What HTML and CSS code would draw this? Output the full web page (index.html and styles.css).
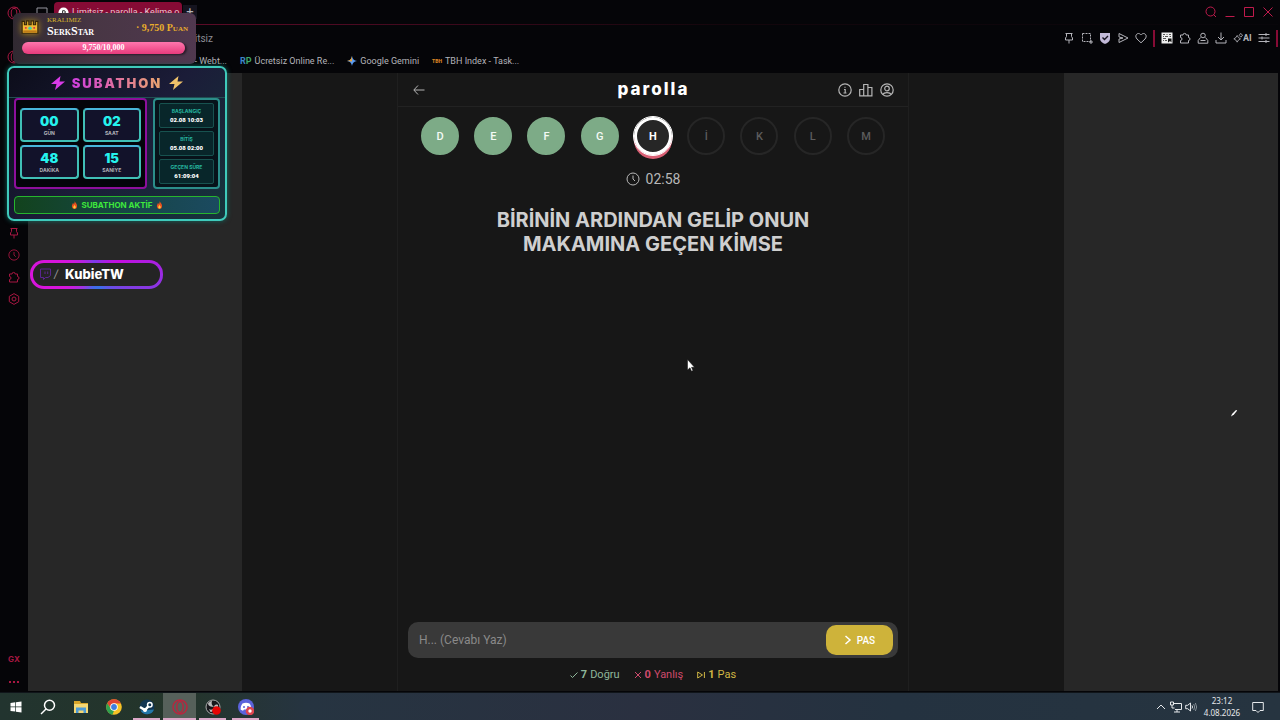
FILE: index.html
```html
<!DOCTYPE html>
<html lang="tr">
<head>
    <meta charset="UTF-8">
    <meta name="viewport" content="width=device-width, initial-scale=1.0">
    <title>Limitsiz - parolla</title>
    <link rel="stylesheet" href="styles.css">
</head>
<body>
    <!-- shared icons -->
    <svg class="sprite" aria-hidden="true">
        <symbol id="i-pin" viewBox="0 0 12 12"><path d="M2.500 1.500h7M3.500 1.500v3L2.500 6v2h7V6l-1-1.500v-3M6 8v3.500"/></symbol>
        <symbol id="i-puzzle" viewBox="0 0 12 12"><path d="M1.500 3h2.500a1.600 1.600 0 0 1 3.200 0H9.500v2.500a1.500 1.500 0 0 1 0 3V11h-8V8.500a1.500 1.500 0 0 0 0-3z"/></symbol>
        <symbol id="i-opera" viewBox="0 0 14 14"><circle cx="7" cy="7" r="6"/><ellipse cx="7" cy="7" rx="2.800" ry="4.600"/><path d="M7 2.400a3 3 0 0 1 4 0M7 11.600a3 3 0 0 0 4 0"/></symbol>
        <symbol id="i-clock" viewBox="0 0 14 14"><circle cx="7" cy="7" r="6"/><path d="M7 3.500V7l2 2"/></symbol>
        <symbol id="i-fire" viewBox="0 0 10 12"><path fill="#e8501e" d="M5 0c.5 2 3.800 3.500 3.800 7A3.800 4.300 0 0 1 1 8C1 5.500 2.500 5 2.500 3c1 .5 1.500 1.200 1.500 2C5 4 5.500 2 5 0z"/><path fill="#ffc83d" d="M5 5.500c.3 1.500 2 2 2 3.800a2 2 0 0 1-4 0C3 8 4.500 7.500 5 5.500z"/></symbol>
        <symbol id="i-bolt" viewBox="0 0 14 14"><path d="M9.500 0 0 8h5.500L4 14l10-8.500H8.500z"/></symbol>
    </svg>

    <div class="browser">
        <nav class="sidebar">
            <a href="#" aria-label="Opera"><svg class="icon-l"><use href="#i-opera"/></svg></a>
            <a href="#" class="sidebar-home" aria-label="GX"><svg class="icon-l"><use href="#i-opera"/></svg></a>
            <div class="sidebar-tools">
                <a href="#" aria-label="Pin"><svg class="icon"><use href="#i-pin"/></svg></a>
                <a href="#" aria-label="Geçmiş"><svg class="icon"><use href="#i-clock"/></svg></a>
                <a href="#" aria-label="Eklentiler"><svg class="icon"><use href="#i-puzzle"/></svg></a>
                <a href="#" aria-label="Ayarlar"><svg class="icon" viewBox="0 0 12 12"><path d="M6 .6 10.700 3.300v5.400L6 11.400 1.300 8.700V3.300z"/><circle cx="6" cy="6" r="2"/></svg></a>
            </div>
            <div class="sidebar-bottom">
                <span class="gx">GX</span>
                <span class="more"><i></i><i></i><i></i></span>
            </div>
        </nav>

        <div class="window">
            <div class="tabs">
                <svg class="workspace" viewBox="0 0 12 12"><path d="M1 2h10v8H1z"/></svg>
                <div class="tab">
                    <svg class="tab-icon" viewBox="0 0 12 12"><circle cx="6" cy="6" r="5.500" fill="#fff"/><path d="M5 9V4h1.500a1.500 1.500 0 0 1 0 3H5" stroke="#222"/></svg>
                    <span>Limitsiz - parolla - Kelime o</span>
                </div>
                <button class="new-tab" aria-label="Yeni sekme">+</button>
                <div class="window-buttons">
                    <button aria-label="Ara"><svg class="icon" viewBox="0 0 12 12"><circle cx="5.500" cy="5.500" r="4.500"/><path d="m8.500 8.500 2.500 2.500"/></svg></button>
                    <button aria-label="Küçült"><svg class="icon" viewBox="0 0 12 12"><path d="M1.500 10.500h9"/></svg></button>
                    <button aria-label="Büyüt"><svg class="icon" viewBox="0 0 12 12"><path d="M1.500 1.500h9v9h-9z"/></svg></button>
                    <button aria-label="Kapat"><svg class="icon" viewBox="0 0 12 12"><path d="m1.500 1.500 9 9m0-9-9 9"/></svg></button>
                </div>
            </div>

            <div class="address">
                <span class="address-text">Limitsiz</span>
                <div class="address-tools">
                    <svg class="icon"><use href="#i-pin"/></svg>
                    <svg class="icon" viewBox="0 0 12 12"><path stroke-dasharray="2 1" d="M1.500 1.500h8v8h-8z"/><path d="M10 8v4M8 10h4"/></svg>
                    <svg class="icon" viewBox="0 0 12 12"><path fill="#c3bad9" stroke="none" d="M1 1h10v5.500c0 3-2.500 4.500-5 5.500-2.500-1-5-2.500-5-5.500z"/><path stroke="#161320" stroke-width="1.400" d="m3.500 5.500 2 2 3.500-3.500"/></svg>
                    <svg class="icon" viewBox="0 0 12 12"><path d="M2 1.500 11 6l-9 4.500V7L6 6 2 5z"/></svg>
                    <svg class="icon" viewBox="0 0 12 12"><path d="M6 10.800 2 7C-.5 4 1.500 1.500 3.500 1.500 5 1.500 6 3 6 3s1-1.500 2.500-1.500c2 0 4 2.500 1.500 5.500z"/></svg>
                    <i class="divider"></i>
                    <svg class="icon" viewBox="0 0 12 12"><path fill="#eee" stroke="none" d="M.5.5h11v11H.5z"/><path stroke="#555" d="M2 2.500h2M5.500 2.500h1M8 2.500h2M2 4.500h1M4 4.500h3M8.500 4.500H10M2 6.500h3M2 8.500h1M4 8.500h2"/><path fill="#111" stroke="none" d="M7 6.500h3.500v4L9 9l-2 1.500z"/></svg>
                    <svg class="icon"><use href="#i-puzzle"/></svg>
                    <svg class="icon" viewBox="0 0 12 12"><circle cx="6" cy="3.500" r="2.300"/><path d="M3.500 5.500 1.200 8.500v2.700h9.600V8.500L8.500 5.500M3.500 8.500h5"/></svg>
                    <svg class="icon" viewBox="0 0 12 12"><path d="M6 .5V8M3 5l3 3 3-3M1 8v3h10V8"/></svg>
                    <span class="ai"><svg class="icon-s" viewBox="0 0 12 12"><path d="M5 3 6.500 5.500 9 7 6.500 8.500 5 11 3.500 8.500 1 7l2.500-1.500zM9 .5l2.500 2L9.500 5 7.500 3z"/></svg>AI</span>
                    <svg class="icon" viewBox="0 0 12 12"><path d="M.5 2.500h11M.5 6h11M.5 9.500h11M8 1v3M4 4.500v3M8 8v3"/></svg>
                    <i class="divider"></i>
                </div>
            </div>

            <div class="bookmarks">
                <a href="#" class="first">- Webt...</a>
                <a href="#"><b class="rp">R<em>P</em></b>Ücretsiz Online Re...</a>
                <a href="#"><svg class="gem" viewBox="0 0 10 10"><path fill="#5b9bf0" d="M5 0c.5 3 2 4.500 5 5-3 .5-4.500 2-5 5-.5-3-2-4.500-5-5 3-.5 4.500-2 5-5z"/><path fill="#e8a33a" d="M5 0C4.500 3 3 4.500 0 5l5 .5z"/></svg>Google Gemini</a>
                <a href="#"><b class="tbh">TBH</b>TBH Index - Task...</a>
            </div>

            <div class="page">
                <aside class="ad"></aside>
                <div class="stage">
                    <main class="app">
                        <header class="app-header">
                            <a href="#" class="back" aria-label="Geri"><svg viewBox="0 0 12 12"><path d="M11.500 6H1M5 1.500.8 6 5 10.500"/></svg></a>
                            <h1>parolla</h1>
                            <div class="app-actions">
                                <button aria-label="Bilgi"><svg viewBox="0 0 14 14"><circle cx="7" cy="7" r="6.200"/><path d="M6 6.500h1.200v3.500M5.500 10h3M7 3.800v1"/></svg></button>
                                <button aria-label="İstatistik"><svg viewBox="0 0 14 14"><path d="M.7 6.500h4v6.300h-4zM4.700 1.500h4.200v11.300H4.700zM8.900 4.500h4v8.300h-4z"/></svg></button>
                                <button aria-label="Profil"><svg viewBox="0 0 14 14"><circle cx="7" cy="7" r="6.200"/><circle cx="7" cy="5.500" r="2.300"/><path d="M3 11.500c1-2.500 7-2.500 8 0"/></svg></button>
                            </div>
                        </header>

                        <ul class="letters">
                            <li class="done">D</li>
                            <li class="done">E</li>
                            <li class="done">F</li>
                            <li class="done">G</li>
                            <li class="current">H</li>
                            <li>İ</li>
                            <li>K</li>
                            <li>L</li>
                            <li>M</li>
                        </ul>

                        <div class="clock"><svg class="icon-l"><use href="#i-clock"/></svg>02:58</div>

                        <h2 class="question">BİRİNİN ARDINDAN GELİP ONUN<br>MAKAMINA GEÇEN KİMSE</h2>

                        <form class="answer">
                            <input type="text" aria-label="Cevap" placeholder="H... (Cevabı Yaz)">
                            <button type="button"><svg viewBox="0 0 8 10"><path d="m1.500 1 4.500 4-4.500 4"/></svg>PAS</button>
                        </form>

                        <div class="score">
                            <span class="right"><svg viewBox="0 0 8 8"><path d="m.5 4.500 2 2 5-5"/></svg><b>7</b> Doğru</span>
                            <span class="wrong"><svg viewBox="0 0 8 8"><path d="m1 1 6 6m0-6-6 6"/></svg><b>0</b> Yanlış</span>
                            <span class="passed"><svg viewBox="0 0 8 8"><path d="M.7 1v6L5.500 4zM7.400 1v6"/></svg><b>1</b> Pas</span>
                        </div>
                    </main>
                </div>
                <aside class="ad"></aside>
            </div>
        </div>
    </div>

    <footer class="taskbar">
        <button class="start" aria-label="Başlat"><svg viewBox="0 0 16 16"><path fill="#fff" d="m2.500 4 4.800-.7v4.300H2.500zM8 3.200l5.500-.8v5.200H8zM2.500 8.300h4.800v4.300L2.500 12zM8 8.300h5.500v5.300L8 12.800z"/></svg></button>
        <button aria-label="Ara"><svg viewBox="0 0 16 16" fill="none" stroke="#fff" stroke-width="1.500"><circle cx="9.500" cy="6.200" r="5"/><path d="M6 10 1 15"/></svg></button>
        <button aria-label="Dosyalar"><svg viewBox="0 0 16 16"><path fill="#d9a62b" d="M1 2h6l1 2h7v3H1z"/><path fill="#f4d774" d="M1 5h14v9H1z"/><path fill="#4d9bd6" d="M3 8.500h10V14h-2.500v-2.500h-5V14H3z"/></svg></button>
        <button aria-label="Chrome"><svg viewBox="0 0 16 16"><circle cx="8" cy="8" r="7.800" fill="#f6c325"/><path fill="#df4434" d="M1.200 4.200A7.800 7.800 0 0 1 15 4.500H8L4.800 9.500z"/><path fill="#2fa150" d="M1.200 4.200 5 10l3 1.800-1.600 3.900A7.800 7.800 0 0 1 1.200 4.200z"/><circle cx="8" cy="8" r="3.800" fill="#fff"/><circle cx="8" cy="8" r="2.900" fill="#3e7de0"/></svg></button>
        <button class="open" aria-label="Steam"><svg viewBox="0 0 16 16"><circle cx="8" cy="8" r="7.500" fill="#123552"/><path fill="#2477a8" d="M1.500 11.500A7.500 7.500 0 0 0 15 10.500L9 11z"/><path stroke="#fff" stroke-width="2.600" d="m1 8 5 3 4.500-5"/><circle cx="10.800" cy="5.800" r="3" fill="#fff"/><circle cx="10.800" cy="5.800" r="1.500" fill="#123552"/><circle cx="6" cy="11" r="2" fill="#fff"/></svg></button>
        <button class="open active" aria-label="Opera GX"><svg viewBox="0 0 16 16" fill="none" stroke="#b5283f" stroke-width="1.500"><circle cx="8" cy="8" r="7"/><ellipse cx="8" cy="8" rx="3.200" ry="5.500"/></svg></button>
        <button class="open" aria-label="OBS"><svg viewBox="0 0 16 16"><circle cx="8" cy="8" r="7" fill="#17171b" stroke="#aaa"/><path fill="#bbb" d="M7 2c-1 3 0 4.500 2 5.500C6 8 4 7.500 3 5c0-1 2-3 4-3zM13 6c-2-1-4 0-4 2.500 1.500-1 4 0 4 2zM4 10c2 1.500 4 .5 4.500-1 .5 2-1 4-3 4z"/><circle cx="11.500" cy="11.500" r="4.300" fill="#e60505"/></svg></button>
        <button class="open" aria-label="Discord"><svg viewBox="0 0 16 16"><circle cx="8" cy="8" r="8" fill="#5b63dc"/><path fill="#fff" d="M4.500 4.500c2-1 5-1 7 0 1.500 2 2 4 1.800 6.200l-2.300 1-1-1.200H6l-1 1.200-2.300-1C2.500 8.500 3 6.500 4.500 4.500z"/><circle cx="6" cy="8" r="1" fill="#5b63dc"/><circle cx="10" cy="8" r="1" fill="#5b63dc"/><circle cx="12" cy="12" r="4.300" fill="#dd4550"/><circle cx="12" cy="12" r="1.700" fill="#fff"/></svg></button>
        <div class="tray">
            <svg viewBox="0 0 12 12"><path d="m2 8 4-4 4 4"/></svg>
            <svg viewBox="0 0 12 12"><path d="M4 2.500h7.500v6H5M7 8.500V11M4 11h6M.5 1h3v3h-3zM2 4v3h2.500"/></svg>
            <svg viewBox="0 0 12 12"><path d="M.7 4.300h2L5.500 2v8L2.700 7.700h-2zM7 4.500q1 1.500 0 3"/><path opacity=".5" d="M8.700 3q2 3 0 6M10.400 2q2.500 4 0 8"/></svg>
            <time>23:12<br>4.08.2026</time>
            <svg class="notice" viewBox="0 0 12 12"><path d="M.7 1.500h10.600v8H8L6 11.500l-2-2H.7z"/></svg>
        </div>
    </footer>

    <!-- stream overlays -->
    <section class="king">
        <div class="king-top">
            <svg class="crown" viewBox="0 0 16 14"><path fill="#f2ba32" stroke="#332409" d="M1 2h2v3h2V1.500h2V5h2V1.500h2V5h2V2h2v10.500H1z"/><path fill="#bf7c18" d="M2 10h12v2H2z"/><circle cx="8" cy="8" r="1.500" fill="#3fd0ae"/><path fill="#d8354a" d="M3.500 7h1.500v1.500H3.500zM11 7h1.500v1.500H11z"/></svg>
            <div class="king-name">
                <span>KRALIMIZ</span>
                <strong>SerkStar</strong>
            </div>
            <span class="king-score">· 9,750 Puan</span>
        </div>
        <div class="king-bar">9,750/10,000</div>
    </section>

    <section class="subathon">
        <h3><svg class="bolt"><use href="#i-bolt"/></svg><span>SUBATHON</span><svg class="bolt gold"><use href="#i-bolt"/></svg></h3>
        <div class="sub-body">
            <div class="counter">
                <div><b>00</b><small>GÜN</small></div>
                <div><b>02</b><small>SAAT</small></div>
                <div><b>48</b><small>DAKİKA</small></div>
                <div><b>15</b><small>SANİYE</small></div>
            </div>
            <div class="dates">
                <div><small>BAŞLANGIÇ</small><b>02.08 10:03</b></div>
                <div><small>BİTİŞ</small><b>05.08 02:00</b></div>
                <div><small>GEÇEN SÜRE</small><b>61:09:04</b></div>
            </div>
        </div>
        <div class="sub-status"><svg><use href="#i-fire"/></svg>SUBATHON AKTİF<svg><use href="#i-fire"/></svg></div>
    </section>

    <div class="channel">
        <svg viewBox="0 0 12 12"><path d="M1.500 1h10v6.500l-2.500 2H6.500L4.500 11.500v-2h-3zM6 3.500V6M8.700 3.500V6"/></svg>
        <i>/</i>
        <strong>KubieTW</strong>
    </div>

    <svg class="cursor" viewBox="0 0 8 13"><path fill="#fff" stroke="#111" stroke-width=".5" d="M.5.5v10.500L3 8.800l1.500 3.500 1.500-.7-1.500-3.300h3z"/></svg>
    <svg class="pen" viewBox="0 0 8 8"><path fill="#fff" d="M1 7.500 2 5l4-4 1.200.5L4 5.500z"/></svg>
</body>
</html>
```
FILE: styles.css
```css
* {
    box-sizing: border-box;
}
body {
    margin: 0;
    height: 100vh;
    display: flex;
    flex-direction: column;
    position: relative;
    overflow: hidden;
    background: #050508;
    color: #b4b4ba;
    font-family: Roboto, "Noto Sans", sans-serif;
    font-size: 9px;
}
button {
    border: none;
    background: none;
    padding: 0;
    color: inherit;
    font-family: inherit;
    cursor: pointer;
}
a {
    color: inherit;
    text-decoration: none;
}
svg {
    display: block;
    flex: none;
    fill: none;
}
.sprite {
    position: absolute;
    width: 0;
    height: 0;
}
.icon {
    width: 12px;
    height: 12px;
    stroke: currentColor;
}
.icon-l {
    width: 14px;
    height: 14px;
    stroke: currentColor;
}
.icon-s {
    width: 10px;
    height: 10px;
    stroke: currentColor;
}

/* browser */
.browser {
    flex: 1;
    min-height: 0;
    display: flex;
    padding: 0 2px 1px 0;
}
.sidebar {
    width: 28px;
    display: flex;
    flex-direction: column;
    align-items: center;
    padding: 6px 0 6px;
    color: #a81742;
}
.sidebar-home {
    margin-top: 30px;
}
.sidebar-tools {
    display: flex;
    flex-direction: column;
    gap: 10px;
    margin-top: 163px;
}
.sidebar-bottom {
    display: flex;
    flex-direction: column;
    align-items: center;
    gap: 15px;
    margin-top: auto;
}
.gx {
    font-family: Inter, sans-serif;
    font-size: 8px;
    font-weight: bold;
    line-height: 10px;
}
.more {
    display: flex;
    gap: 2px;
    height: 6px;
    align-items: center;
}
.more i {
    width: 2px;
    height: 2px;
    background: #a81742;
}
.window {
    flex: 1;
    display: flex;
    flex-direction: column;
}
.tabs {
    display: flex;
    align-items: center;
    height: 25px;
    padding: 0 2px 0 8px;
    border-bottom: 1px solid;
    border-image: linear-gradient(90deg, #6c0c2c, #4d0a22 25%, #14060c 55%, #08060a) 1;
}
.workspace {
    width: 12px;
    height: 12px;
    margin-right: 6px;
    stroke: #96969e;
}
.tab {
    display: flex;
    align-items: center;
    gap: 3px;
    width: 128px;
    height: 20px;
    padding-left: 4px;
    border-radius: 4px 4px 0 0;
    background: #860b35;
    color: #e5c6d0;
    white-space: nowrap;
}
.tab-icon {
    width: 11px;
    height: 11px;
}
.new-tab {
    width: 14px;
    height: 14px;
    margin-left: 1px;
    background: #15141f;
    font-size: 13px;
    line-height: 14px;
}
.window-buttons {
    display: flex;
    gap: 7px;
    margin-left: auto;
    padding-right: 2px;
    color: #c01a4c;
}
.address {
    display: flex;
    align-items: center;
    justify-content: space-between;
    height: 26px;
}
.address-text {
    width: 185px;
    text-align: right;
    font-size: 10px;
    color: #8c8c94;
}
.address-tools {
    display: flex;
    align-items: center;
    gap: 6px;
}
.divider {
    width: 2px;
    height: 17px;
    background: #860b35;
}
.ai {
    display: flex;
    align-items: center;
    width: 19px;
    font-weight: bold;
}
.bookmarks {
    display: flex;
    align-items: center;
    gap: 13px;
    height: 22px;
    padding-bottom: 3px;
}
.bookmarks a {
    display: flex;
    align-items: center;
    gap: 3px;
    white-space: nowrap;
}
.bookmarks .first {
    width: 199px;
    justify-content: flex-end;
}
.rp {
    color: #3e86c9;
}
.rp em {
    color: #3fa76a;
    font-style: normal;
}
.gem {
    width: 10px;
    height: 10px;
}
.tbh {
    color: #d98324;
    font-size: 5px;
    font-weight: 900;
}

/* page */
.page {
    flex: 1;
    min-height: 0;
    display: grid;
    grid-template-columns: 13fr 50fr 13fr;
}
.ad {
    background: #272727;
}
.stage {
    display: flex;
    justify-content: center;
    background: #171717;
}
.app {
    display: flex;
    flex-direction: column;
    width: 100%;
    max-width: 512px;
    border: solid #1f1f1f;
    border-width: 0 1px;
}
.app-header {
    display: grid;
    grid-template-columns: 1fr auto 1fr;
    align-items: center;
    height: 34px;
    padding: 0 14px 0 15px;
    border-bottom: 1px solid #222;
    color: #b5b5b5;
}
.app-header h1 {
    margin: 0;
    padding-bottom: 2px;
    color: #fff;
    font-family: Inter, sans-serif;
    font-size: 17px;
    font-weight: 800;
    letter-spacing: 2px;
    line-height: 20px;
}
.back svg {
    width: 12px;
    height: 12px;
    stroke: currentColor;
}
.app-actions {
    display: flex;
    justify-content: flex-end;
    gap: 7px;
}
.app-actions svg {
    width: 14px;
    height: 14px;
    stroke: currentColor;
    stroke-width: 1.2;
}
.letters {
    display: flex;
    justify-content: space-between;
    margin: 0;
    padding: 10px 23px;
    list-style: none;
}
.letters li {
    display: flex;
    align-items: center;
    justify-content: center;
    width: 38px;
    height: 38px;
    border: 2px solid #262626;
    border-radius: 50%;
    color: #5c5c5c;
    font-size: 11px;
    font-weight: 500;
}
.letters .done {
    border-color: #7dab87;
    background: #7dab87;
    color: #f4faf5;
}
.letters .current {
    border: 3px solid #fff;
    outline: 1px solid #fff;
    background: #262626;
    box-shadow: 0 4px 0 #d95f74;
    color: #fff;
    font-weight: 700;
}
.clock {
    display: flex;
    align-items: center;
    justify-content: center;
    gap: 6px;
    margin-top: 5px;
    color: #b8b8b8;
    font-size: 14px;
    line-height: 18px;
}
.question {
    margin: 20px 0 0;
    color: #cfcfcf;
    font-family: Inter, sans-serif;
    font-size: 20px;
    font-weight: 700;
    line-height: 24px;
    text-align: center;
}
.answer {
    display: flex;
    height: 36px;
    margin: auto 10px 0;
    padding: 3px 5px 3px 11px;
    border-radius: 10px;
    background: #393939;
}
.answer input {
    flex: 1;
    min-width: 0;
    padding: 0;
    border: none;
    outline: none;
    background: none;
    color: #ddd;
    font-family: inherit;
    font-size: 12px;
}
.answer input::placeholder {
    color: #8a8a8a;
}
.answer button {
    display: flex;
    align-items: center;
    justify-content: center;
    gap: 5px;
    width: 67px;
    border-radius: 10px;
    background: #ceb33a;
    color: #fff;
    font-size: 10px;
    font-weight: 500;
}
.answer button svg {
    width: 8px;
    height: 10px;
    stroke: #fff;
    stroke-width: 1.5;
}
.score {
    display: flex;
    justify-content: center;
    gap: 14px;
    padding: 9px 0 8px;
    font-size: 11px;
    line-height: 16px;
}
.score span {
    display: flex;
    align-items: center;
    gap: 3px;
}
.score svg {
    width: 8px;
    height: 8px;
    stroke: currentColor;
}
.right {
    color: #8fb79a;
}
.wrong {
    color: #cf4a6c;
}
.passed {
    color: #cfb644;
}

/* taskbar */
.taskbar {
    display: flex;
    height: 28px;
    border-top: 1px solid #10151a;
    background: linear-gradient(90deg, #22342f, #24352a 14%, #263441 24%, #2a3040 50%, #243240 70%, #263440);
}
.taskbar button {
    display: flex;
    align-items: center;
    justify-content: center;
    width: 33px;
}
.taskbar .start {
    width: 31px;
}
.taskbar button svg {
    width: 16px;
    height: 16px;
}
.taskbar .open {
    background: linear-gradient(#dba8c8, #dba8c8) center bottom / 27px 2px no-repeat;
}
.taskbar .active {
    background: linear-gradient(#dba8c8, #dba8c8) center bottom / 33px 2px no-repeat, #56605a;
}
.tray {
    display: flex;
    align-items: center;
    gap: 3px;
    margin-left: auto;
    padding-right: 16px;
    color: #e6e9ec;
}
.tray svg {
    width: 12px;
    height: 12px;
    stroke: currentColor;
}
.tray time {
    width: 44px;
    margin-right: 5px;
    font-family: "Noto Sans", sans-serif;
    font-size: 8px;
    line-height: 12px;
    text-align: center;
    white-space: nowrap;
}

/* king widget */
.king {
    position: absolute;
    left: 13px;
    top: 13px;
    width: 183px;
    height: 51px;
    padding: 3px 8px 0;
    border-radius: 6px;
    background: linear-gradient(90deg, #302931, #483644 45%, #50384f);
    font-family: "Liberation Serif", serif;
    font-weight: bold;
}
.king-top {
    display: flex;
    align-items: center;
    height: 22px;
    gap: 8px;
}
.crown {
    width: 18px;
    height: 16px;
    filter: drop-shadow(0 0 3px #b08c1c);
}
.king-name {
    display: flex;
    flex-direction: column;
}
.king-name span {
    color: #d8b62c;
    font-size: 7px;
    font-weight: normal;
    line-height: 9px;
}
.king-name strong {
    color: #fff;
    font-size: 12px;
    font-variant: small-caps;
    line-height: 13px;
}
.king-score {
    margin-left: auto;
    color: #e9ae2b;
    font-size: 10px;
    font-variant: small-caps;
}
.king-bar {
    height: 12px;
    margin: 4px 3px 0 1px;
    border-radius: 6px;
    background: linear-gradient(#ff76ad, #e83b7c);
    box-shadow: 2px 1px 2px #2b1c2a;
    color: #fff;
    font-size: 8px;
    line-height: 12px;
    text-align: center;
}

/* subathon widget */
.subathon {
    position: absolute;
    left: 7px;
    top: 66px;
    width: 220px;
    padding: 0 5px 5px;
    border: 2px solid #3fcabb;
    border-radius: 7px;
    background: linear-gradient(135deg, #0c0d1a, #1b1c38 50%, #16343c);
    box-shadow: 0 0 5px #12665f;
    font-family: Inter, sans-serif;
}
.subathon h3 {
    display: flex;
    align-items: center;
    justify-content: center;
    gap: 7px;
    height: 30px;
    margin: 0 -5px;
    border-bottom: 1px solid #205052;
    font-size: 13px;
    font-weight: 900;
    letter-spacing: 2px;
}
.subathon h3 span {
    background: linear-gradient(90deg, #cf3ee0, #e0709f 50%, #eaa66d);
    -webkit-background-clip: text;
    background-clip: text;
    color: transparent;
}
.bolt {
    width: 14px;
    height: 14px;
    fill: #d93be8;
}
.gold {
    fill: #f0c26a;
}
.sub-body {
    display: flex;
    gap: 6px;
    height: 91px;
}
.counter {
    flex: 1;
    display: grid;
    grid-template-columns: 1fr 1fr;
    grid-auto-rows: 34px;
    align-content: center;
    gap: 3px 4px;
    padding: 0 4px;
    border: 2px solid #8d0f9c;
    border-radius: 4px;
    background: #04040a;
}
.counter div {
    display: flex;
    flex-direction: column;
    align-items: center;
    justify-content: center;
    gap: 2px;
    border: 2px solid #40bfb6;
    border-top-color: #48b5da;
    border-radius: 4px;
    background: #12122a;
}
.counter b {
    color: #25f2ee;
    font-size: 13px;
    font-weight: 900;
    line-height: 14px;
}
.subathon small {
    font-size: 5px;
    font-weight: 700;
    line-height: 6px;
}
.dates {
    display: flex;
    flex-direction: column;
    justify-content: center;
    gap: 3px;
    width: 67px;
    padding: 0 4px;
    border: 2px solid #2b8e8a;
    border-radius: 4px;
    background: #07131a;
}
.dates div {
    display: flex;
    flex-direction: column;
    align-items: center;
    justify-content: center;
    gap: 2px;
    height: 25px;
    border: 1px solid #17524f;
    border-radius: 2px;
    background: #08262a;
}
.dates small {
    color: #27b7a0;
}
.dates b {
    color: #fff;
    font-family: Roboto, sans-serif;
    font-size: 6px;
    font-weight: 900;
    line-height: 8px;
    white-space: nowrap;
}
.sub-status {
    display: flex;
    align-items: center;
    justify-content: center;
    gap: 3px;
    height: 18px;
    margin-top: 7px;
    border: 1px solid #27b52e;
    border-radius: 4px;
    background: linear-gradient(90deg, #12431d, #17464a 60%, #1b4a60);
    color: #3ee93c;
    font-size: 8px;
    font-weight: 700;
}
.sub-status svg {
    width: 7px;
    height: 8px;
}

/* channel badge */
.channel {
    position: absolute;
    left: 30px;
    top: 260px;
    display: flex;
    align-items: center;
    gap: 3px;
    width: 133px;
    height: 29px;
    padding: 0 0 2px 6px;
    border: 3px solid transparent;
    border-radius: 14px;
    background: linear-gradient(#242424, #242424) padding-box,
        conic-gradient(from 90deg, #9a2be2, #3671e8 22%, #4a64e8 30%, #d814dc 44%, #d814dc 56%, #7a3cea 72%, #c50ce0 92%, #9a2be2) border-box;
    font-family: Inter, sans-serif;
}
.channel svg {
    width: 12px;
    height: 12px;
    stroke: #5a2590;
}
.channel i {
    width: 6px;
    color: #999;
    font-size: 11px;
}
.channel strong {
    margin-left: 2px;
    color: #fff;
    font-size: 13px;
    font-weight: 800;
}

.cursor {
    position: absolute;
    left: 687px;
    top: 359px;
    width: 8px;
    height: 13px;
}
.pen {
    position: absolute;
    left: 1230px;
    top: 409px;
    width: 8px;
    height: 8px;
}
```
